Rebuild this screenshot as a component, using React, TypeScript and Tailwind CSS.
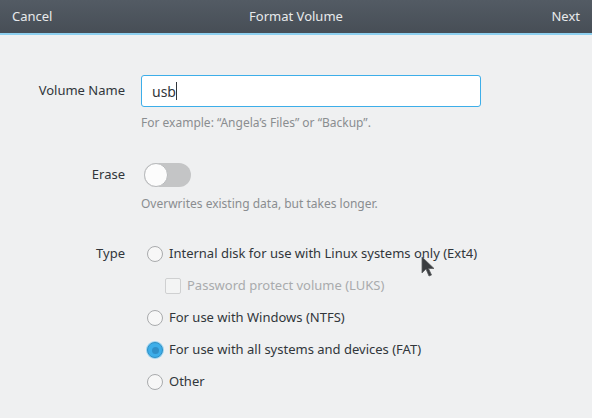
import { useState } from "react";

const font = { fontFamily: '"Noto Sans", "Open Sans", sans-serif' };

function Radio({ checked }: { checked?: boolean }) {
  return checked ? (
    <span className="w-4 h-4 rounded-full border border-[#3191c6] bg-[#3daee9] flex items-center justify-center shadow-[0_0_0_1px_#9fd5f1]">
      <span className="w-[7px] h-[7px] rounded-full bg-[#2f8fc8]" />
    </span>
  ) : (
    <span className="w-4 h-4 rounded-full border border-[#a9abad] bg-[#f7f7f7]" />
  );
}

function Option({ label, checked }: { label: string; checked?: boolean }) {
  return (
    <div className="h-8 flex items-center gap-[6px]">
      <Radio checked={checked} />
      <span className="text-[13px] text-[#31363b]">{label}</span>
    </div>
  );
}

export default function App() {
  const [name] = useState("usb");
  return (
    <div className="w-[592px] h-[418px] bg-[#eff0f1] relative overflow-hidden" style={font}>
      {/* Header */}
      <div className="h-[35px] bg-gradient-to-b from-[#535b64] to-[#474e56] border-b-2 border-[#8dd0f0] flex items-center justify-between px-3 text-[13px] text-[#e8eaec] relative">
        <span>Cancel</span>
        <span className="absolute left-1/2 -translate-x-1/2">Format Volume</span>
        <span>Next</span>
      </div>

      <div className="pt-10 grid grid-cols-[125px_1fr] gap-x-4 items-start">
        {/* Volume Name */}
        <div className="h-8 flex items-center justify-end text-[13px] text-[#31363b]">Volume Name</div>
        <div>
          <div className="w-[340px] h-8 bg-white border border-[#3daee9] rounded-[3px] flex items-center px-[10px] text-[14px] text-[#31363b]">
            {name}
            <span className="w-px h-[18px] bg-[#31363b]" />
          </div>
          <p className="mt-[7px] text-[12px] text-[#8a8d90]">For example: “Angela’s Files” or “Backup”.</p>
        </div>

        {/* Erase */}
        <div className="mt-[31px] h-6 flex items-center justify-end text-[13px] text-[#31363b]">Erase</div>
        <div className="mt-[31px]">
          <div className="w-[47px] h-6 ml-[3px] rounded-full bg-[#c4c5c6] relative">
            <span className="absolute left-0 top-0 w-6 h-6 rounded-full bg-[#fcfcfc] border border-[#b8babc]" />
          </div>
          <p className="mt-[8px] text-[12px] text-[#8a8d90]">Overwrites existing data, but takes longer.</p>
        </div>

        {/* Type */}
        <div className="mt-[25px] h-8 flex items-center justify-end text-[13px] text-[#31363b]">Type</div>
        <div className="mt-[25px] pl-[6px]">
          <Option label="Internal disk for use with Linux systems only (Ext4)" />
          <div className="h-8 flex items-center gap-[6px] pl-[18px]">
            <span className="w-4 h-4 rounded-[2px] border border-[#cfd0d1] bg-[#f3f4f4]" />
            <span className="text-[13px] text-[#a9abad]">Password protect volume (LUKS)</span>
          </div>
          <Option label="For use with Windows (NTFS)" />
          <Option label="For use with all systems and devices (FAT)" checked />
          <Option label="Other" />
        </div>
      </div>

      {/* mouse pointer */}
      <svg className="absolute left-[421px] top-[256px]" width="14" height="22" viewBox="0 0 14 22">
        <path d="M1 1 L1 17 L5 13 L8 20 L10.5 19 L7.5 12.5 L13 12.5 Z" fill="#3a3d40" stroke="#5a5d60" strokeWidth="0.8" />
      </svg>
    </div>
  );
}
